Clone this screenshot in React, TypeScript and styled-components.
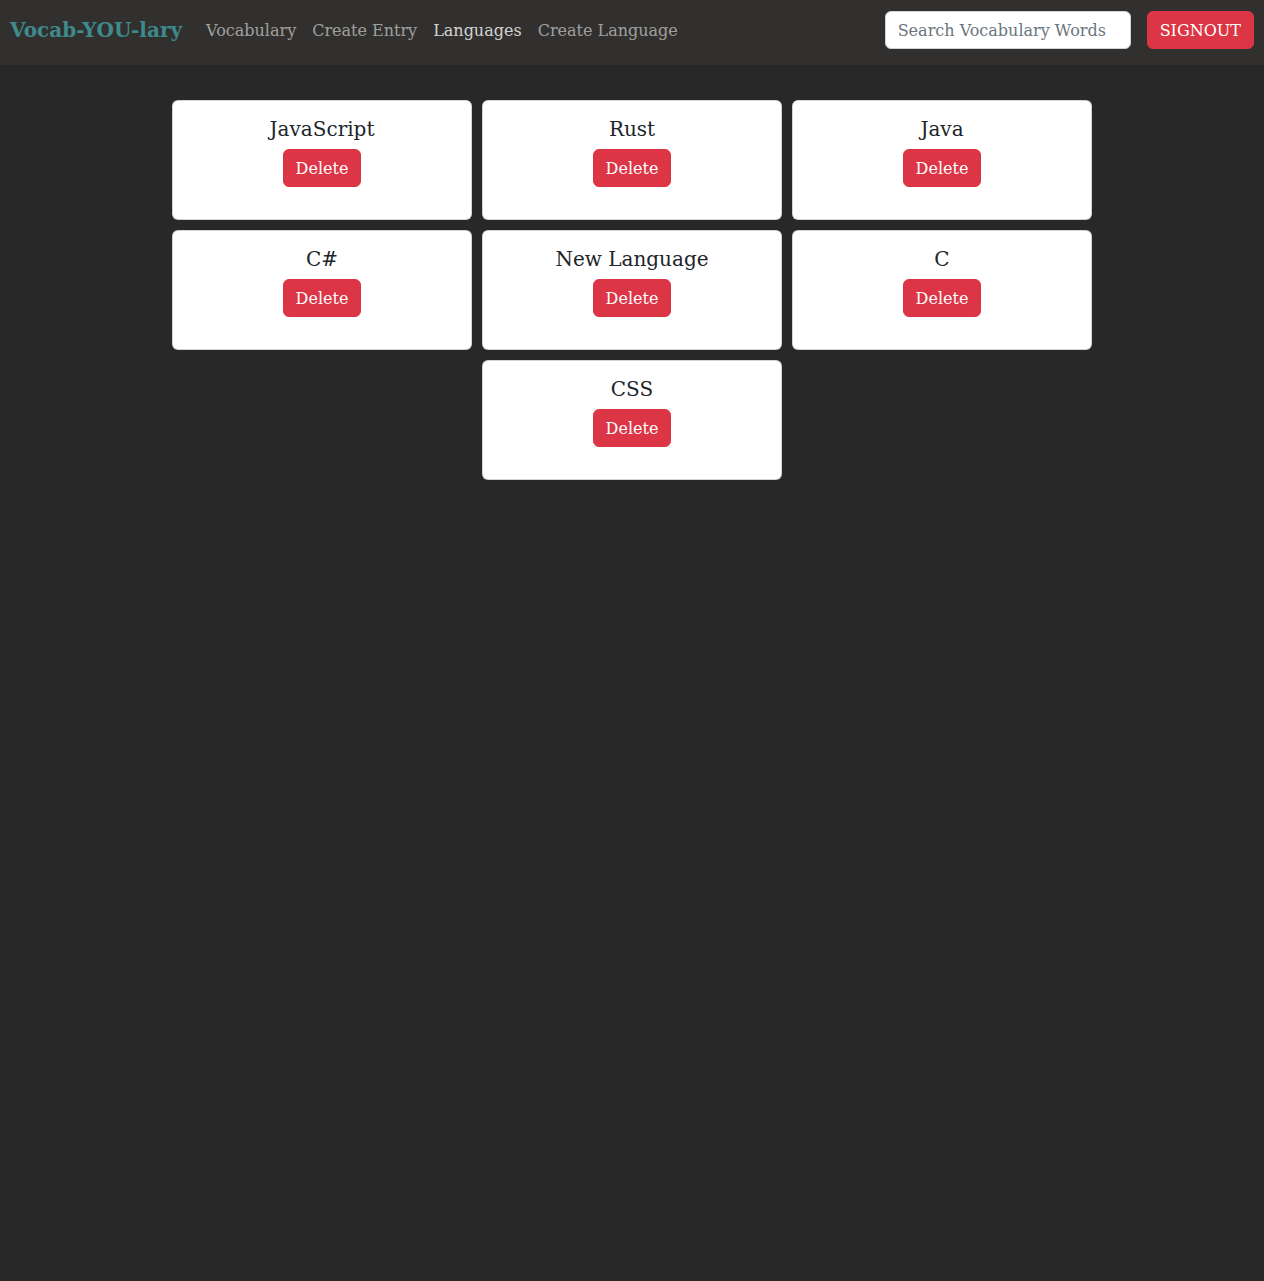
import React from 'react';
import styled, {createGlobalStyle} from 'styled-components';

const GlobalStyle = createGlobalStyle`
  * {
    box-sizing: border-box;
  }
  body {
    margin: 0;
    background: #282828;
    font-family: 'DejaVu Serif', serif;
    color: #212529;
  }
`;

const Navbar = styled.nav`
  height: 65px;
  background: #31302e;
  display: flex;
  align-items: flex-start;
  padding: 11px 10px 0 10px;
`;

const Row = styled.div`
  height: 38px;
  display: flex;
  align-items: center;
  width: 100%;
`;

const Brand = styled.a`
  font-size: 20px;
  font-weight: bold;
  color: #3e8a8c;
  text-decoration: none;
  margin-right: 16px;
  white-space: nowrap;
`;

const NavLinks = styled.div`
  display: flex;
  flex: 1;
`;

const NavLink = styled.a<{$active?: boolean}>`
  font-size: 16px;
  padding: 0 8px;
  color: ${(p) => (p.$active ? 'rgba(255,255,255,0.8)' : 'rgba(255,255,255,0.55)')};
  text-decoration: none;
  white-space: nowrap;
`;

const Search = styled.input`
  width: 246px;
  height: 38px;
  padding: 6px 12px;
  font: 16px 'DejaVu Serif', serif;
  border: 1px solid #ced4da;
  border-radius: 6px;
  background: #fff;
  color: #212529;
  margin-right: 16px;

  &::placeholder {
    color: #6c757d;
  }
`;

const DangerBtn = styled.button`
  height: 38px;
  padding: 7px 12px 5px;
  font: 16px 'DejaVu Serif', serif;
  line-height: 24px;
  color: #fff;
  background: #dc3545;
  border: 1px solid #dc3545;
  border-radius: 6px;
  cursor: pointer;
`;

const Cards = styled.main`
  display: flex;
  flex-wrap: wrap;
  justify-content: center;
  gap: 10px;
  width: 920px;
  margin: 35px auto 0;
`;

const Card = styled.div`
  width: 300px;
  height: 120px;
  background: #fff;
  border: 1px solid rgba(0, 0, 0, 0.175);
  border-radius: 6px;
  padding: 16px;
  display: flex;
  flex-direction: column;
  align-items: center;
`;

const CardTitle = styled.h5`
  margin: 0 0 8px;
  font-size: 20px;
  font-weight: normal;
  line-height: 1.2;
`;

const languages = ['JavaScript', 'Rust', 'Java', 'C#', 'New Language', 'C', 'CSS'];

export default function App() {
  return (
    <>
      <GlobalStyle />
      <Navbar>
        <Row>
          <Brand href="#">Vocab-YOU-lary</Brand>
          <NavLinks>
            <NavLink href="#">Vocabulary</NavLink>
            <NavLink href="#">Create Entry</NavLink>
            <NavLink href="#" $active>Languages</NavLink>
            <NavLink href="#">Create Language</NavLink>
          </NavLinks>
          <Search placeholder="Search Vocabulary Words" />
          <DangerBtn>SIGNOUT</DangerBtn>
        </Row>
      </Navbar>
      <Cards>
        {languages.map((lang) => (
          <Card key={lang}>
            <CardTitle>{lang}</CardTitle>
            <DangerBtn>Delete</DangerBtn>
          </Card>
        ))}
      </Cards>
    </>
  );
}
